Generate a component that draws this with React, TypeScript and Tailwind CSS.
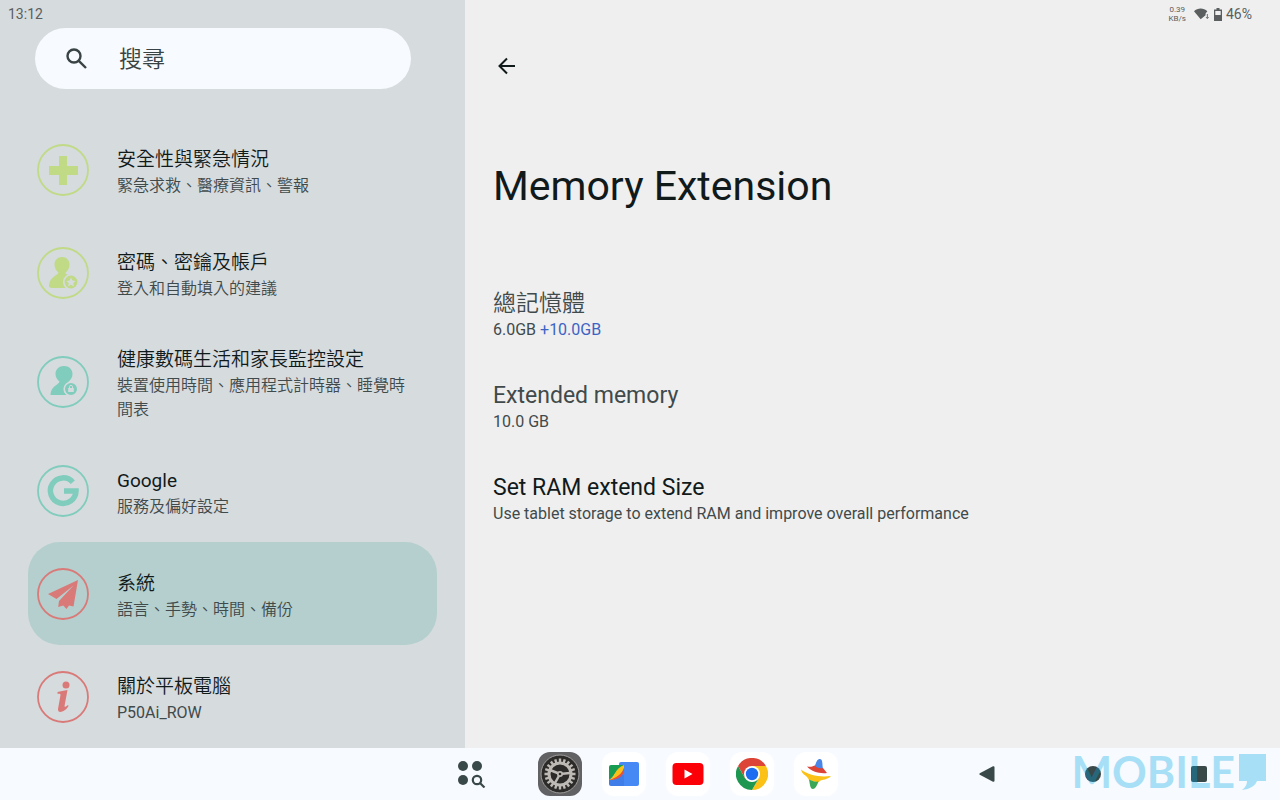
import { useState } from 'react';
import type { ReactNode } from 'react';

type Item = {
  id: string;
  title: string;
  summary: string;
  tone: string;
  icon: ReactNode;
};

const ITEMS: Item[] = [
  {
    id: 'safety',
    title: '安全性與緊急情況',
    summary: '緊急求救、醫療資訊、警報',
    tone: 'text-[#c0da86]',
    icon: <path d="M22 12h8v10h11v9H30v10h-8V31H12v-9h10z" fill="currentColor" />,
  },
  {
    id: 'passwords',
    title: '密碼、密鑰及帳戶',
    summary: '登入和自動填入的建議',
    tone: 'text-[#c0da86]',
    icon: (
      <>
        <path
          d="M25 10c-4.500 0-7.500 3.300-7.500 7.500 0 3.500 1.500 6 4 8-.5 3-9 4-9.500 13 0 1.500 1 2.500 2.500 2.500h17V28c-2.500-.7-3-1.500-3-2.500 2.500-2 4-4.500 4-8 0-4.200-3-7.500-7.500-7.500z"
          fill="currentColor"
        />
        <circle cx="34" cy="35" r="7.200" fill="currentColor" stroke="#d6dbde" strokeWidth="1.600" />
        <path d="M34 30.500l1.400 3 3.300.4-2.400 2.200.6 3.300-2.900-1.600-2.900 1.600.6-3.300-2.400-2.200 3.300-.4z" fill="#d6dbde" />
      </>
    ),
  },
  {
    id: 'wellbeing',
    title: '健康數碼生活和家長監控設定',
    summary: '裝置使用時間、應用程式計時器、睡覺時間表',
    tone: 'text-[#80ccbd]',
    icon: (
      <>
        <path
          d="M27 10c-5 0-8.500 3.500-8.500 8 0 3.500 2 6 4 7.500 0 3-9 4.500-9 13.500H34V27.500c-2-.4-2.500-1.200-2.500-2 2-1.500 4-4 4-7.500 0-4.500-3.500-8-8.500-8z"
          fill="currentColor"
        />
        <circle cx="34" cy="33" r="6.800" fill="currentColor" stroke="#d6dbde" strokeWidth="1.600" />
        <rect x="31.200" y="32" width="5.600" height="4" fill="#d6dbde" />
        <path d="M32.500 32v-1.200a1.500 1.500 0 013 0V32" fill="none" stroke="#d6dbde" />
      </>
    ),
  },
  {
    id: 'google',
    title: 'Google',
    summary: '服務及偏好設定',
    tone: 'text-[#80ccbd]',
    icon: (
      <path d="M35.800 17.200A12.800 12.800 0 1 0 39 26H27" fill="none" stroke="currentColor" strokeWidth="5.500" />
    ),
  },
  {
    id: 'system',
    title: '系統',
    summary: '語言、手勢、時間、備份',
    tone: 'text-[#d97a78]',
    icon: (
      <path d="M41 12L11 26l8.500 5L36.500 17.500 22 33l-.8 6 5-1.500 3.300 3.500 2.500-3.500 4.500 1z" fill="currentColor" />
    ),
  },
  {
    id: 'about',
    title: '關於平板電腦',
    summary: 'P50Ai_ROW',
    tone: 'text-[#d97a78]',
    icon: (
      <g fill="currentColor">
        <circle cx="29" cy="14" r="3.500" />
        <path d="M20.500 21c3-.8 6-1.500 10-2L27.500 35c-.2 1.500 1.500.8 3.500-1l.5 1c-3 5.500-11 8.500-10.500 3L23.500 24c.2-1.500-1-1.500-3-1.200z" />
      </g>
    ),
  },
];

function NavItem({ item, active, onSelect }: { item: Item; active: boolean; onSelect: () => void }) {
  return (
    <button
      type="button"
      onClick={onSelect}
      aria-current={active ? 'page' : undefined}
      className={`flex min-h-[103px] w-full items-center gap-7 rounded-[32px] py-[17px] pl-[9px] pr-6 text-left ${active ? 'bg-[#b4cfce]' : ''}`}
    >
      <svg viewBox="0 0 52 52" className={`size-[52px] shrink-0 ${item.tone}`} aria-hidden="true">
        <circle cx="26" cy="26" r="25" fill="none" stroke="currentColor" strokeWidth="1.800" />
        {item.icon}
      </svg>
      <span className="flex flex-col pt-[5px]">
        <span className="text-[19px] leading-7 text-[#111a1a]">{item.title}</span>
        <span className="text-base leading-6 text-[#414a4b]">{item.summary}</span>
      </span>
    </button>
  );
}

function StatusIcons() {
  return (
    <div className="flex h-7 items-center justify-end gap-1 pr-7 text-[#5a5e5e]">
      <span className="text-center text-[8px] leading-[9px]">
        0.39
        <br />
        KB/s
      </span>
      <svg viewBox="0 0 18 14" className="ml-1 h-3.5 w-4" fill="currentColor" aria-hidden="true">
        <path d="M0 4C4-.3 11-.3 15 4l-2 2.500v2L7.500 13z" />
        <path d="M15 7v5M13.500 10.500L15 12l1.500-1.500" stroke="currentColor" fill="none" />
      </svg>
      <svg viewBox="0 0 8 13" className="h-[13px] w-2" aria-hidden="true">
        <path d="M2.500 0h3v1.500H8V13H0V1.500h2.500z" fill="currentColor" />
        <path d="M1.300 3h5.400v4H1.300z" fill="#efefef" />
      </svg>
      <span className="text-sm">46%</span>
    </div>
  );
}

function Setting({ title, children, muted }: { title: string; children: ReactNode; muted?: boolean }) {
  return (
    <div className="flex h-[92px] flex-col justify-center">
      <h2 className={`text-[23px] leading-7 ${muted ? 'text-[#414a4b]' : 'text-[#111a1a]'}`}>{title}</h2>
      <p className="text-base leading-6 text-[#414a4b]">{children}</p>
    </div>
  );
}

function AppTile({ label, dark, children }: { label: string; dark?: boolean; children: ReactNode }) {
  return (
    <button
      type="button"
      aria-label={label}
      className={`flex size-11 items-center justify-center overflow-hidden rounded-xl ${dark ? 'bg-[#626265]' : 'bg-white'}`}
    >
      {children}
    </button>
  );
}

const TEETH = Array.from({ length: 20 }, (_, i) => i * 18);

function SettingsIcon() {
  return (
    <svg viewBox="0 0 44 44" className="size-11" aria-hidden="true">
      <circle cx="22" cy="22" r="19" fill="#2c2b29" stroke="#a09e9b" />
      <g stroke="#bdbab5">
        {TEETH.map((deg) => (
          <path key={deg} d="M22 6.500v4" strokeWidth="2.400" transform={`rotate(${deg} 22 22)`} />
        ))}
        <circle cx="22" cy="22" r="11" fill="none" strokeWidth="3" />
        <path d="M22 22L12 18M22 22l10-1M22 22l-5 9" strokeWidth="2.500" />
      </g>
      <circle cx="22" cy="22" r="3" fill="#bdbab5" />
      <circle cx="22" cy="22" r="1.300" fill="#2c2b29" />
    </svg>
  );
}

function FilesIcon() {
  return (
    <svg viewBox="0 0 32 26" className="h-[26px] w-8" aria-hidden="true">
      <rect x="11" y="1" width="20" height="24" rx="2" fill="#4688f4" />
      <path d="M1 14h15v11H3a2 2 0 01-2-2z" fill="#3f7ee8" />
      <path d="M3 4h13L1 19V6a2 2 0 012-2z" fill="#179c52" />
      <path d="M16 4v3C13 15 8 19 1 19c6-3 6-12 15-15z" fill="#fbc116" />
      <path d="M16 7v4c-2 5-7 8-15 8 7-2 13-6 15-12z" fill="#e8503a" />
    </svg>
  );
}

function ChromeIcon() {
  return (
    <svg viewBox="0 0 32 32" className="size-8" aria-hidden="true">
      <path d="M16 8h13.900A16 16 0 0116 32l6.900-12z" fill="#fbc116" />
      <path d="M2.100 8L9 20l7 4 6.900-4L16 32A16 16 0 012.100 8z" fill="#1e9850" />
      <path d="M2.100 8A16 16 0 0129.900 8H16l-7 12z" fill="#dc4437" />
      <circle cx="16" cy="16" r="8" fill="#fff" />
      <circle cx="16" cy="16" r="6.200" fill="#1d6df0" />
    </svg>
  );
}

function TopIcon() {
  return (
    <svg viewBox="0 0 32 32" className="size-8" aria-hidden="true">
      <path d="M14 9c2-2 2-8 6-8 3 0 2 5 3 10l-5 1z" fill="#4a86e8" />
      <path d="M7 8.500c3 .5 5 .5 7.500-1 3 3 6 3 8.500 2.500l4 5C20 16 11 13.500 7 8.500z" fill="#dc4437" />
      <path d="M1 11.500C9 17.500 20 19.500 31 18c-2 2-5 3.500-9 4-2 .5-3 2-4 2.500L9 22c-1-4-7-5-8-10.500z" fill="#fbc116" />
      <path d="M9 21.500c3 1.500 6 2.500 9.500 2C17 28 15 31 13 31c-3 0-3-5-4-9.500z" fill="#3aa757" />
    </svg>
  );
}

function Taskbar() {
  return (
    <footer className="relative flex h-[52px] shrink-0 items-center bg-[#f7fafe] text-[#394848]">
      <div className="flex-1" />
      <div className="flex items-center gap-5 pl-4">
        <button type="button" aria-label="All apps" className="mr-8">
          <svg viewBox="0 0 28 28" className="size-7" fill="currentColor" aria-hidden="true">
            <circle cx="5" cy="6" r="5" />
            <circle cx="19" cy="6" r="5" />
            <circle cx="5" cy="20" r="5" />
            <g fill="none" stroke="currentColor" strokeWidth="2.200">
              <circle cx="19" cy="20" r="4.200" />
              <path d="M22 23l4.500 4.500" />
            </g>
          </svg>
        </button>
        <AppTile label="Settings" dark>
          <SettingsIcon />
        </AppTile>
        <AppTile label="Files">
          <FilesIcon />
        </AppTile>
        <AppTile label="YouTube">
          <svg viewBox="0 0 32 22" className="h-[22px] w-8" aria-hidden="true">
            <rect x="0.500" width="31" height="22" rx="4" fill="#fb0007" />
            <path d="M12.500 6.500v9l8-4.500z" fill="#fff" />
          </svg>
        </AppTile>
        <AppTile label="Chrome">
          <ChromeIcon />
        </AppTile>
        <AppTile label="Play">
          <TopIcon />
        </AppTile>
      </div>
      <div className="flex flex-1 justify-end">
        <div className="flex items-center gap-[90px] pr-[73px]">
          <button type="button" aria-label="Back">
            <svg viewBox="0 0 16 16" className="size-4" fill="currentColor" aria-hidden="true">
              <path d="M14 0.300q1.500-.5 1.500 1.200v13q0 1.700-1.500 1.200L.8 8.800q-1-.8 0-1.600z" />
            </svg>
          </button>
          <button type="button" aria-label="Home" className="size-4 rounded-full bg-[#394848]" />
          <button type="button" aria-label="Recents" className="size-4 rounded-xs bg-[#394848]" />
        </div>
      </div>
      <div className="pointer-events-none absolute right-3.5 top-0 flex h-12 items-center gap-1 text-[#00a8e6] opacity-[0.32]">
        <span className="font-[Lato] text-[43px] font-bold leading-[48px]">MOBILE</span>
        <svg viewBox="0 0 27 36" className="h-9 w-[27px]" fill="currentColor" aria-hidden="true">
          <path d="M0 0h27v27h-9c-2 5-7 8-15 9 4-3 5-6 5-9H0z" />
        </svg>
      </div>
    </footer>
  );
}

export default function App() {
  const [selected, setSelected] = useState('system');
  const [query, setQuery] = useState('');

  return (
    <div className="flex min-h-screen flex-col font-[Roboto,'Noto_Sans_CJK_TC_DemiLight','Noto_Sans_CJK_TC',sans-serif]">
      <div className="flex flex-1">
        <aside className="w-[465px] shrink-0 bg-[#d6dbde]">
          <div className="flex h-7 items-center pl-2 text-sm text-[#5a5e5e]">13:12</div>
          <label className="ml-[35px] mr-[54px] flex h-[61px] items-center gap-7 rounded-full bg-[#f7fafe] pl-7 text-[#394343]">
            <svg viewBox="0 0 28 28" className="size-7" fill="none" stroke="currentColor" strokeWidth="2.400" aria-hidden="true">
              <circle cx="11" cy="11" r="6.500" />
              <path d="M15.800 15.800L23 23" />
            </svg>
            <input
              type="search"
              aria-label="搜尋"
              placeholder="搜尋"
              value={query}
              onChange={(e) => setQuery(e.target.value)}
              className="min-w-0 flex-1 bg-transparent pt-1 text-[23px] outline-none placeholder:text-[#394343]"
            />
          </label>
          <nav className="mt-[29px] px-7">
            {ITEMS.map((item) => (
              <NavItem key={item.id} item={item} active={item.id === selected} onSelect={() => setSelected(item.id)} />
            ))}
          </nav>
        </aside>

        <main className="flex-1 bg-[#efefef]">
          <StatusIcons />
          <div className="px-7">
            <button type="button" aria-label="Back" className="mt-6 flex size-7 items-center justify-center text-[#111a1a]">
              <svg viewBox="0 0 18 18" className="size-[18px]" fill="none" stroke="currentColor" strokeWidth="2" aria-hidden="true">
                <path d="M17 9H2M9 1.500L1.500 9 9 16.500" />
              </svg>
            </button>
            <h1 className="mt-20 text-[41px] leading-[52px] text-[#111a1a]">Memory Extension</h1>
            <section className="mt-[58px]">
              <Setting title="總記憶體" muted>
                6.0GB <span className="text-[#3d63c4]">+10.0GB</span>
              </Setting>
              <Setting title="Extended memory" muted>
                10.0 GB
              </Setting>
              <Setting title="Set RAM extend Size">Use tablet storage to extend RAM and improve overall performance</Setting>
            </section>
          </div>
        </main>
      </div>
      <Taskbar />
    </div>
  );
}
